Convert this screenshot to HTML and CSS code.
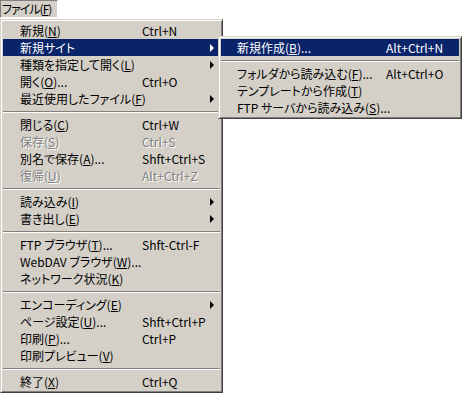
FILE: index.html
```html
<!DOCTYPE html>
<html lang="ja">
<head>
    <meta charset="UTF-8">
    <title>ファイル メニュー</title>
    <link rel="stylesheet" href="styles.css">
</head>
<body>
    <div class="menubar">
        <span class="menubar-item pressed">ファイル(<u>F</u>)</span>
    </div>

    <div class="menu main-menu">
        <div class="item"><span class="label">新規(<u>N</u>)</span><span class="key">Ctrl+N</span></div>
        <div class="item active">
            <span class="label">新規サイト</span><span class="key"></span><span class="arrow"></span>
            <div class="menu sub-menu">
                <div class="item active"><span class="label">新規作成(<u>B</u>)...</span><span class="key">Alt+Ctrl+N</span></div>
                <div class="sep"></div>
                <div class="item"><span class="label">フォルダから読み込む(<u>F</u>)...</span><span class="key">Alt+Ctrl+O</span></div>
                <div class="item"><span class="label">テンプレートから作成(<u>T</u>)</span></div>
                <div class="item"><span class="label">FTP サーバから読み込み(<u>S</u>)...</span></div>
            </div>
        </div>
        <div class="item"><span class="label">種類を指定して開く(<u>L</u>)</span><span class="key"></span><span class="arrow"></span></div>
        <div class="item"><span class="label">開く(<u>O</u>)...</span><span class="key">Ctrl+O</span></div>
        <div class="item"><span class="label">最近使用したファイル(<u>F</u>)</span><span class="key"></span><span class="arrow"></span></div>
        <div class="sep"></div>
        <div class="item"><span class="label">閉じる(<u>C</u>)</span><span class="key">Ctrl+W</span></div>
        <div class="item disabled"><span class="label">保存(<u>S</u>)</span><span class="key">Ctrl+S</span></div>
        <div class="item"><span class="label">別名で保存(<u>A</u>)...</span><span class="key">Shft+Ctrl+S</span></div>
        <div class="item disabled"><span class="label">復帰(<u>U</u>)</span><span class="key">Alt+Ctrl+Z</span></div>
        <div class="sep"></div>
        <div class="item"><span class="label">読み込み(<u>I</u>)</span><span class="key"></span><span class="arrow"></span></div>
        <div class="item"><span class="label">書き出し(<u>E</u>)</span><span class="key"></span><span class="arrow"></span></div>
        <div class="sep"></div>
        <div class="item"><span class="label">FTP ブラウザ(<u>T</u>)...</span><span class="key">Shft-Ctrl-F</span></div>
        <div class="item"><span class="label">WebDAV ブラウザ(<u>W</u>)...</span></div>
        <div class="item"><span class="label">ネットワーク状況(<u>K</u>)</span></div>
        <div class="sep"></div>
        <div class="item"><span class="label">エンコーディング(<u>E</u>)</span><span class="key"></span><span class="arrow"></span></div>
        <div class="item"><span class="label">ページ設定(<u>U</u>)...</span><span class="key">Shft+Ctrl+P</span></div>
        <div class="item"><span class="label">印刷(<u>P</u>)...</span><span class="key">Ctrl+P</span></div>
        <div class="item"><span class="label">印刷プレビュー(<u>V</u>)</span></div>
        <div class="sep"></div>
        <div class="item"><span class="label">終了(<u>X</u>)</span><span class="key">Ctrl+Q</span></div>
    </div>
</body>
</html>
```

FILE: styles.css
```css
body {
    margin: 0;
    background-color: #fff;
    color: #000;
    font-family: "Noto Sans CJK JP", "Liberation Sans", sans-serif;
    font-size: 12px;
    font-feature-settings: "palt";
}
.menubar {
    height: 19px;
}
.menubar-item {
    display: block;
    box-sizing: border-box;
    width: 58px;
    height: 18px;
    line-height: 16px;
    padding-left: 1px;
    white-space: nowrap;
    overflow: hidden;
    letter-spacing: -1px;
    background-color: #d4d0c8;
}
.menubar-item.pressed {
    border-top: 1px solid #808080;
    border-left: 1px solid #808080;
    border-bottom: 1px solid #fff;
    border-right: 1px solid #fff;
}
.menu {
    box-sizing: border-box;
    background-color: #d4d0c8;
    border: 1px solid;
    border-color: #d4d0c8 #404040 #404040 #d4d0c8;
    box-shadow: inset 1px 1px #fff, inset -1px -1px #808080;
    padding: 2px;
}
.main-menu {
    width: 223px;
}
.item {
    position: relative;
    display: grid;
    grid-template-columns: 122px 1fr 12px;
    height: 17px;
    line-height: 17px;
    padding-left: 17px;
    white-space: nowrap;
}
.item.active {
    background-color: #0a246a;
    color: #fff;
}
.item.disabled {
    color: #808080;
    text-shadow: 1px 1px 0 #fff;
}
.arrow {
    align-self: center;
    width: 0;
    height: 0;
    border-top: 4px solid transparent;
    border-bottom: 4px solid transparent;
    border-left: 4px solid #000;
    margin-left: 2px;
}
.item.active > .arrow {
    border-left-color: #fff;
}
.sep {
    box-sizing: border-box;
    height: 9px;
    padding-top: 4px;
}
.sep::before {
    content: '';
    display: block;
    border-top: 1px solid #808080;
    border-bottom: 1px solid #fff;
}
.sub-menu {
    position: absolute;
    left: 215px;
    top: -3px;
    width: 244px;
    color: #000;
}
.sub-menu .item {
    grid-template-columns: 149px 1fr;
    padding-left: 16px;
}
```
